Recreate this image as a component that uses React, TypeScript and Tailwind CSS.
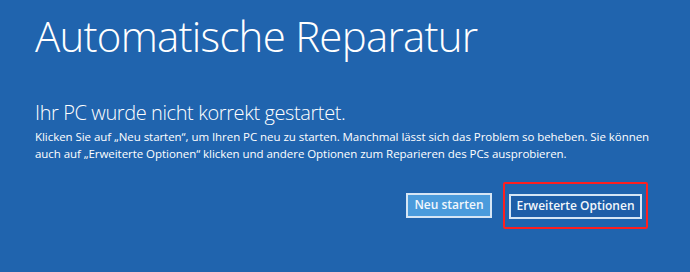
import React from "react";

export default function App() {
  return (
    <div className="w-[690px] h-[272px] bg-[#2064ae] text-white overflow-hidden" style={{ fontFamily: '"Open Sans", "Noto Sans", sans-serif' }}>
      <div className="pl-[35px] pt-[10px]">
        <h1 className="text-[42px] leading-[52px] font-light tracking-[-0.75px]">Automatische Reparatur</h1>
        <h2 className="mt-[38px] text-[20px] leading-[26px] font-light tracking-[-0.4px]">Ihr PC wurde nicht korrekt gestartet.</h2>
        <p className="mt-[2px] text-[11.5px] leading-[17px] font-normal tracking-[-0.05px]">
          Klicken Sie auf „Neu starten“, um Ihren PC neu zu starten. Manchmal lässt sich das Problem so beheben. Sie können
          <br />
          auch auf „Erweiterte Optionen“ klicken und andere Optionen zum Reparieren des PCs ausprobieren.
        </p>
      </div>
      <div className="flex justify-end items-center gap-[11px] pr-[42px] mt-[20px]">
        <button className="w-[86px] h-[25px] bg-[#4a9bdc] border-2 border-[#d6e6f5] text-[12px] font-semibold text-[#f2f7fc] leading-none">Neu starten</button>
        <div className="border-[2px] border-[#ff1f1f] px-[4px] py-[8px] rounded-[2px]">
          <button className="w-[133px] h-[25px] bg-[#1d5ea8] border-2 border-[#d6e6f5] text-[12px] font-semibold text-[#f2f7fc] leading-none">Erweiterte Optionen</button>
        </div>
      </div>
    </div>
  );
}
